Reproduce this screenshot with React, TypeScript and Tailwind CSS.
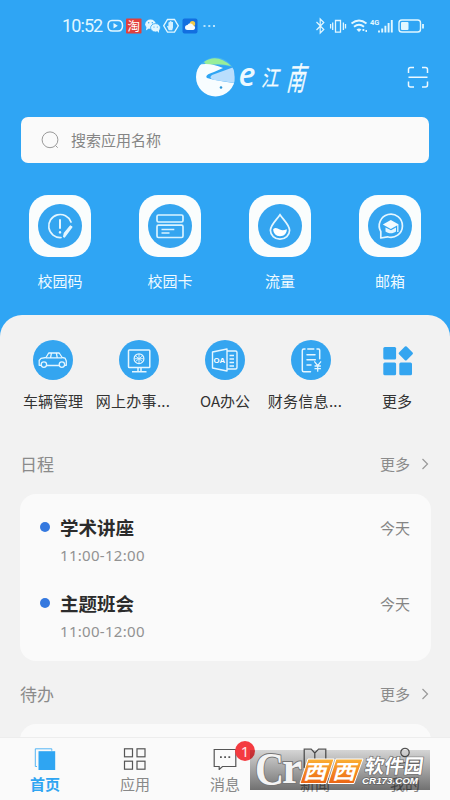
import React from "react";

type Item = {
  label: string;
  icon: React.ReactNode;
};

type Lecture = {
  title: string;
  time: string;
  day: string;
};

const quickApps: Item[] = [
  {
    label: "校园码",
    icon: (
      <svg viewBox="0 0 44 44" className="size-11" fill="none" stroke="#e4f6ff" strokeWidth="1.7" strokeLinecap="round">
        <path d="M33 18A11.5 11.5 0 1 0 23 33.5" />
        <path d="M22 16v8" strokeWidth="2" />
        <path d="M22 28.2v.2" strokeWidth="2.4" />
        <path d="m33.5 23-7.6 10.2.8-3.8 5.8-7" strokeWidth="2" />
      </svg>
    ),
  },
  {
    label: "校园卡",
    icon: (
      <svg viewBox="0 0 44 44" className="size-11" fill="none" stroke="#d9f3ff" strokeWidth="1.7" strokeLinejoin="round">
        <rect x="9" y="11" width="26" height="7" rx="1.5" />
        <rect x="9" y="21.2" width="26" height="12.3" rx="1.5" />
        <path d="M13.5 25.5h12.8M13.5 29h8" strokeWidth="1.4" />
      </svg>
    ),
  },
  {
    label: "流量",
    icon: (
      <svg viewBox="0 0 44 44" className="size-11" fill="none" stroke="#e4f6ff" strokeWidth="1.7">
        <path d="M22 10.8c4 5.6 9.6 10.3 9.6 15.5a9.6 8.9 0 0 1-19.2 0c0-5.2 5.6-9.9 9.6-15.5Z" />
        <path d="M15.2 25c2.6-1.8 4.3-.5 6.6.6 2.3 1 4.5.7 7-.4.2 4.2-2.7 7-6.8 7s-6.8-3-6.8-7.2Z" fill="#fff" stroke="none" />
      </svg>
    ),
  },
  {
    label: "邮箱",
    icon: (
      <svg viewBox="0 0 44 44" className="size-11" fill="none" stroke="#e4f6ff" strokeWidth="1.7" strokeLinejoin="round">
        <path d="M12.8 34v-6.5A11.6 11.6 0 1 1 19.5 32.8Z" />
        <path d="m14.8 20.5 8-4.5 8 4.5-8 4.5Z" fill="#f2fbff" stroke="none" />
        <path d="M17.5 23.5v4c3 2.4 7.5 2.4 10.5 0v-4l-5 2.8Z" fill="#e4f6ff" stroke="none" />
        <path d="M29.8 21v7" strokeWidth="1.3" />
      </svg>
    ),
  },
];

const services: Item[] = [
  {
    label: "车辆管理",
    icon: (
      <svg viewBox="0 0 40 40" className="size-10" fill="none" stroke="#e4f6ff" strokeWidth="1.3" strokeLinejoin="round">
        <circle cx="20" cy="20" r="20" fill="#34a5f0" stroke="none" />
        <path d="M8 25.3H6.2v-4.8L8 18.3l5-.8 2.7-4.5h10.5l3 4.5 2.8.6 1.3 3v4.2h-2" />
        <path d="M13 17.8h16M18.5 13l-1 4.8M23.3 13l1 4.8M13.5 25.5h12.8" />
        <circle cx="10.9" cy="24.6" r="2.7" />
        <circle cx="28.9" cy="24.6" r="2.7" />
      </svg>
    ),
  },
  {
    label: "网上办事...",
    icon: (
      <svg viewBox="0 0 40 40" className="size-10" fill="none" stroke="#e4f6ff" strokeWidth="1.5">
        <circle cx="20" cy="20" r="20" fill="#34a5f0" stroke="none" />
        <rect x="9.5" y="10" width="21.3" height="17.5" rx=".8" />
        <circle cx="20" cy="18.7" r="4.9" strokeWidth="1.2" />
        <path d="M15.5 18.7h9M20 14v9.5M16.7 16l6.6 5.4M23.3 16l-6.6 5.4" strokeWidth=".9" />
        <path d="M19 27.5v3.7M22 27.5v3.7M13 31.8h14.5" />
      </svg>
    ),
  },
  {
    label: "OA办公",
    icon: (
      <svg viewBox="0 0 40 40" className="size-10" fill="none" stroke="#e4f6ff" strokeWidth="1.4" strokeLinejoin="round">
        <circle cx="20" cy="20" r="20" fill="#34a5f0" stroke="none" />
        <path d="M7.5 12 22 9v22L7.5 28Z" />
        <path d="M22 11h8.5q1.5 0 1.5 1.5v15q0 1.5-1.5 1.5H22M24.5 15.500H29M24.5 19H29M24.5 22.5H29M24.5 26H29" />
        <text x="8.4" y="22.8" fill="#fff" stroke="none" fontSize="7.8" fontWeight="700" fontFamily="Liberation Sans">OA</text>
      </svg>
    ),
  },
  {
    label: "财务信息...",
    icon: (
      <svg viewBox="0 0 40 40" className="size-10" fill="none" stroke="#e4f6ff" strokeWidth="1.5" strokeLinecap="round">
        <circle cx="20" cy="20" r="20" fill="#34a5f0" stroke="none" />
        <path d="M14 9h-1.2q-1.5 0-1.5 1.5v19.8q0 1.5 1.5 1.5h6.7M16.8 9h6M26 9h1.5q1.2 0 1.2 1.2v8.5" />
        <path d="M16 14.8h8M16 19.8h8.3M16 25h4" />
        <path d="m23.7 21.8 3 3.8 3-3.8M26.7 25.6v5.6M24 26h5.4M24 28.7h5.4" strokeWidth="1.3" />
      </svg>
    ),
  },
  {
    label: "更多",
    icon: (
      <svg viewBox="0 0 40 40" className="size-10" fill="#34a5f0">
        <rect x="6.3" y="7" width="12.8" height="12.5" rx="1.5" />
        <rect x="6.3" y="22.6" width="12.8" height="12.6" rx="1.5" />
        <rect x="22.3" y="22.6" width="12.7" height="12.6" rx="1.5" />
        <rect x="23.4" y="8" width="10.8" height="10.8" rx="1.2" transform="rotate(45 28.8 13.4)" />
      </svg>
    ),
  },
];

const schedule: Lecture[] = [
  { title: "学术讲座", time: "11:00-12:00", day: "今天" },
  { title: "主题班会", time: "11:00-12:00", day: "今天" },
];

const tabs: Item[] = [
  {
    label: "首页",
    icon: (
      <svg viewBox="0 0 24 24" className="size-6">
        <path d="M4 20.5H2.3V2.8h16.5v2" fill="none" stroke="#55b6f5" strokeWidth="1" />
        <rect x="5.5" y="5.2" width="16.7" height="18.8" fill="#2fa5f2" />
      </svg>
    ),
  },
  {
    label: "应用",
    icon: (
      <svg viewBox="0 0 24 24" className="size-6" fill="none" stroke="#555" strokeWidth="1.2">
        <rect x="1.5" y="2.8" width="8" height="8" />
        <rect x="14" y="2.8" width="8" height="8" />
        <rect x="1.5" y="15.2" width="8" height="8" />
        <rect x="14" y="15.2" width="8" height="8" />
      </svg>
    ),
  },
  {
    label: "消息",
    icon: (
      <svg viewBox="0 0 24 24" className="size-6" fill="none" stroke="#555" strokeWidth="1.2">
        <path d="M1.2 3.5h21.6v17H9.500l-3.3 3v-3h-5Z" />
        <path d="M7 11.2h1.8M11.2 11.2H13M15.4 11.2h1.8" strokeWidth="1.8" />
      </svg>
    ),
  },
  {
    label: "新闻",
    icon: (
      <svg viewBox="0 0 24 24" className="size-6" fill="none" stroke="#555" strokeWidth="1.2">
        <path d="M11.8 7 8.2 3.2H1.2v18.3h21.6V3.2h-7.2L11.8 7v14.5" />
      </svg>
    ),
  },
  {
    label: "我的",
    icon: (
      <svg viewBox="0 0 24 24" className="size-6" fill="none" stroke="#555" strokeWidth="1.2">
        <circle cx="12" cy="6.5" r="4.2" />
        <path d="M2.5 22c1-7 18-7 19 0Z" />
      </svg>
    ),
  },
];

const StatusBar: React.FC = () => (
  <div className="flex h-[52px] items-center justify-between pr-[25px] pl-[62px] text-[#e2f7ff]">
    <div className="flex items-center">
      <span className="w-[45px] font-['Roboto'] text-[18px] leading-none tracking-[-0.9px]">10:52</span>
      <svg viewBox="0 0 110 18" className="h-[18px] w-[110px]" fill="none" stroke="#e2f7ff" strokeWidth="1.5">
        <path d="M5 3.5h6q4.500 0 4.500 5.200T11 14H5.500Q1 14 1 8.700T5 3.500Z" />
        <path d="m6.5 6 4.3 2.7-4.3 2.8Z" fill="#e2f7ff" stroke="none" />
        <rect x="19" y="1.5" width="15.5" height="15" rx=".8" fill="#e2403d" stroke="none" />
        <text x="20.5" y="13.8" fontSize="12.5" fill="#fff" stroke="none" fontFamily="Noto Sans CJK SC">淘</text>
        <g fill="#e2f7ff" stroke="none">
          <ellipse cx="43.5" cy="7.3" rx="5.3" ry="4.7" />
          <path d="m39.5 10-.6 3.5 3-2Z" />
          <ellipse cx="48.5" cy="10.8" rx="4.9" ry="4.2" stroke="#2fa5f4" strokeWidth=".8" />
          <path d="m50 13.5 2 2.5v-3.500Z" />
        </g>
        <g fill="#2fa5f4" stroke="none">
          <circle cx="41.7" cy="5.8" r=".7" />
          <circle cx="45.3" cy="5.8" r=".7" />
          <circle cx="47" cy="10" r=".6" />
          <circle cx="50.3" cy="10" r=".6" />
        </g>
        <path d="M60.5 2.5h7l3.8 6.3-3.8 6.3h-7l-3.8-6.3Z" strokeWidth="1.3" />
        <path d="M61 11.5 59.8 8.7l1.6.6V5.500l1.300-.4.3-1 1.3.1.4.8 1.3.1v5.500l-.8 2.700h-3.500Z" fill="#d5f1ff" stroke="none" />
        <rect x="75.5" y="1.5" width="15" height="15" rx="2" fill="#126fe0" stroke="none" />
        <circle cx="85.5" cy="6.8" r="2.7" fill="#f2c94b" stroke="none" />
        <path d="M80.5 13a2.5 2.5 0 0 1 0-5 3.2 3.2 0 0 1 5.8.5 2.3 2.3 0 0 1 0 4.500Z" fill="#f5fbff" stroke="none" />
        <path d="M96.5 9h2M101.3 9h2M106 9h2" strokeWidth="1.7" />
      </svg>
    </div>
    <svg viewBox="0 0 110 18" className="h-[18px] w-[110px]" fill="none" stroke="#e2f7ff" strokeWidth="1.2">
      <path d="m1.5 5 7.3 7.5L5.2 16V2l3.6 3.500L1.500 13" />
      <path d="M20.5 3.500h5v11.700h-5ZM17.700 5.500v7.500M15.600 7v4.500M28.400 5.500v7.500M30.500 7v4.500" strokeWidth="1.3" />
      <path d="M36.5 6.5q7.5-6 15 0M39 9.8q5-4 10 0" strokeWidth="1.9" />
      <path d="M41.5 12.5q2.5-2 5 0L44 15Z" fill="#e2f7ff" stroke="none" />
      <path d="M47.5 13h1.8M50.5 14h1.5" strokeWidth="1.8" />
      <text x="55" y="7.5" fontSize="7.4" fontWeight="700" fill="#e2f7ff" stroke="none" fontFamily="Roboto">4G</text>
      <path d="M64 15.5v-2M67.2 15.5v-4M70.4 15.5V8.700M73.600 15.500V6M76.800 15.500V3" strokeWidth="1.9" />
      <rect x="84" y="3" width="21.5" height="12" rx="2.8" strokeWidth="1.4" />
      <rect x="86" y="5" width="7.5" height="8" rx="1" fill="#e2f7ff" stroke="none" />
      <path d="M108 7v4.5" strokeWidth="1.8" />
    </svg>
  </div>
);

const BrandRow: React.FC = () => (
  <div className="flex h-[50px] items-center justify-between pr-[21px] pl-[195px]">
    <svg viewBox="0 0 116 44" className="h-11 w-[116px] overflow-visible">
      <defs>
        <clipPath id="globe">
          <circle cx="20.5" cy="22" r="19.5" />
        </clipPath>
      </defs>
      <g clipPath="url(#globe)">
        <path d="M0 0h42v14Q27 7 0 12Z" fill="#49b4ee" />
        <path d="M9 7q13-9 27 4-12-3-24-.5Z" fill="#98ee99" />
        <path d="M3 10Q14 7 28 13l-9 4q-10 3-7 6 11 3 28 5v18H0V10Z" fill="#f8fdff" />
        <path d="M39 12 17 20q-4 3 2 5l21 3Z" fill="#b9defd" />
      </g>
      <circle cx="26" cy="32.5" r="1.3" fill="#2b96d8" />
      <text x="43.5" y="31" fontSize="32" fontStyle="italic" fontWeight="600" fill="#edf9ff" fontFamily="Open Sans">e</text>
      {/* brush style wordmark */}
      <g fill="#f2fbff" stroke="#f2fbff" strokeWidth=".3" fontFamily="Noto Sans CJK SC, sans-serif">
        <text x="0" y="0" fontSize="21" transform="translate(66 31) skewX(-13) scale(.84 1.050)">江</text>
        <text x="0" y="0" fontSize="25" transform="translate(91 35) skewX(-13) scale(.74 1.280)">南</text>
      </g>
    </svg>
    <svg viewBox="0 0 22 22" className="size-[22px]" fill="none" stroke="#edf9ff" strokeWidth="1.5">
      <path d="M1.5 7V3.500q0-2 2-2H7M15 1.500h3.500q2 0 2 2V7M20.500 15.500V19q0 2-2 2H15M7 21H3.500q-2 0-2-2v-3.500M1.500 11.200h19" />
    </svg>
  </div>
);

const SectionHeader: React.FC<{ title: string }> = ({ title }) => (
  <div className="flex h-6 items-center justify-between pr-[21px] pl-5 text-[#8b8b8b]">
    <h2 className="text-[17px] leading-6">{title}</h2>
    <span className="flex items-center gap-[11px] text-[15px] leading-6">
      更多
      <svg viewBox="0 0 8 12" className="h-3 w-2" fill="none" stroke="#999" strokeWidth="1.2">
        <path d="m1.5 1 5 5-5 5" />
      </svg>
    </span>
  </div>
);

const Watermark: React.FC = () => (
  <div className="absolute right-5 bottom-[10px] h-10 w-[180px] bg-linear-to-b from-black/15 to-black/55">
    <svg viewBox="0 0 180 40" className="h-10 w-[180px] overflow-visible">
      <defs>
        <linearGradient id="orange" x1="0" y1="0" x2="0" y2="1">
          <stop offset="0" stopColor="#fbb034" />
          <stop offset="1" stopColor="#ec6413" />
        </linearGradient>
      </defs>
      <g fill="#f4f4f4" stroke="#777" strokeWidth="2" paintOrder="stroke" fontWeight="700" fontFamily="Liberation Serif">
        <text x="5" y="34.500" fontSize="47" textLength="29" lengthAdjust="spacingAndGlyphs">C</text>
        <text x="32" y="33" fontSize="46" textLength="20" lengthAdjust="spacingAndGlyphs">r</text>
      </g>
      <path d="M58 9h26l-8 24.500H50ZM86 9h27l-9 24.500H78Z" fill="url(#orange)" stroke="#fff" strokeWidth="1" />
      <g fill="#fff" fontWeight="700" fontFamily="Noto Sans CJK SC">
        <text x="0" y="0" fontSize="24" transform="translate(53 29) skewX(-16) scale(.96 .84)">西</text>
        <text x="0" y="0" fontSize="24" transform="translate(82 29) skewX(-16) scale(.96 .84)">西</text>
      </g>
      <g fill="#fff" stroke="#666" strokeWidth="1.3" paintOrder="stroke">
        <text x="0" y="0" fontSize="19.5" fontWeight="700" fontFamily="Noto Sans CJK SC" transform="translate(114 23) skewX(-8)">软件园</text>
        <text x="112" y="33.500" fontSize="9.5" fontWeight="700" fontStyle="italic" fontFamily="Liberation Sans" textLength="56" lengthAdjust="spacingAndGlyphs">CR173.COM</text>
      </g>
    </svg>
  </div>
);

const App: React.FC = () => {
  return (
    <div className="relative flex h-[800px] w-[450px] flex-col overflow-hidden bg-[#2fa5f4] font-['Noto_Sans_CJK_SC','Noto_Sans',sans-serif]">
      <header className="h-[315px] shrink-0">
        <StatusBar />
        <BrandRow />

        <div className="mx-[21px] mt-[15px] flex h-[46px] items-center gap-3 rounded-[7px] bg-[#fafafa] pl-5">
          <svg viewBox="0 0 18 18" className="size-[18px]" fill="none" stroke="#999" strokeWidth="1">
            <circle cx="9" cy="8.8" r="7.9" />
            <path d="m14.5 14.5 2.2 2.2" />
          </svg>
          <span className="text-[15px] leading-6 text-[#858585]">搜索应用名称</span>
        </div>

        <div className="mt-8 grid grid-cols-4 px-[5px]">
          {quickApps.map((app) => (
            <div key={app.label} className="flex flex-col items-center">
              <div className="flex size-[62px] items-center justify-center rounded-[19px] bg-[#fafdfd]">
                <div className="size-11 rounded-full bg-[#34a5f0]">{app.icon}</div>
              </div>
              <span className="mt-3 text-[15px] leading-6 text-[#f0faff]">{app.label}</span>
            </div>
          ))}
        </div>
      </header>

      <main className="min-h-0 flex-1 overflow-hidden rounded-t-[22px] bg-[#f2f2f2]">
        <div className="grid grid-cols-5 px-[10px] pt-[25px]">
          {services.map((service) => (
            <div key={service.label} className="flex flex-col items-center">
              {service.icon}
              <span
                className={
                  service.label.endsWith("...")
                    ? "mt-[9px] pr-3 text-[15px] leading-6 tracking-[0.3px] whitespace-nowrap text-[#333]"
                    : "mt-[9px] text-[15px] leading-6 whitespace-nowrap text-[#333]"
                }
              >
                {service.label}
              </span>
            </div>
          ))}
        </div>

        <section className="mt-[39px]">
          <SectionHeader title="日程" />
          <ul className="mt-[18px] mr-[19px] ml-5 flex h-[167px] flex-col rounded-2xl bg-[#fafafa] pt-[19px]">
            {schedule.map((entry) => (
              <li key={entry.title} className="flex h-[76px] shrink-0 items-start pr-[21px] pl-5">
                <span className="mt-[9px] size-[10px] rounded-full bg-[#3478df]" />
                <div className="ml-[10px] flex-1">
                  <p className="text-[18.5px] leading-[28px] font-bold text-[#2c2c2c]">{entry.title}</p>
                  <p className="font-['Noto_Sans'] text-[15px] leading-7 tracking-[0.3px] text-[#929292]">{entry.time}</p>
                </div>
                <span className="pt-px text-[15px] leading-7 text-[#858585]">{entry.day}</span>
              </li>
            ))}
          </ul>
        </section>

        <section className="mt-[21px]">
          <SectionHeader title="待办" />
          <div className="mt-[18px] mr-[19px] ml-5 h-20 rounded-t-2xl bg-[#fafafa]" />
        </section>
      </main>

      <nav className="grid h-[63px] shrink-0 grid-cols-5 border-t border-[#ededed] bg-[#fafafa] pt-2">
        {tabs.map((tab, index) => (
          <div key={tab.label} className="relative flex flex-col items-center">
            {tab.icon}
            <span
              className={
                index === 0
                  ? "mt-[2px] text-[15px] leading-6 font-bold text-[#2fa5f2]"
                  : "mt-[2px] text-[15px] leading-6 text-[#888]"
              }
            >
              {tab.label}
            </span>
            {tab.label === "消息" && (
              <span className="absolute -top-[5px] left-[55px] flex size-5 items-center justify-center rounded-full bg-[#f43b40] font-['Noto_Sans'] text-[15px] text-[#ffe8e8]">
                1
              </span>
            )}
          </div>
        ))}
      </nav>
      <Watermark />
    </div>
  );
};

export default App;
